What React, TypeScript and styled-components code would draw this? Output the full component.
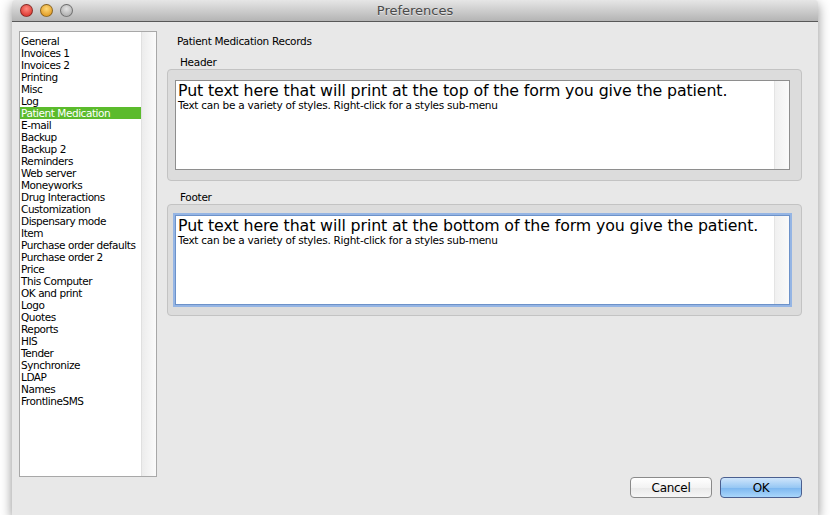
import styled, { createGlobalStyle } from "styled-components";

const GlobalStyle = createGlobalStyle`
    html, body {
        margin: 0;
        padding: 0;
        background: #ffffff;
    }
    body {
        font-family: "DejaVu Sans", "Liberation Sans", sans-serif;
        color: #000;
    }
`

const Window = styled.div`
    width: 806px;
    height: 515px;
    margin-left: 12px;
    background: #e8e8e8;
    box-shadow: 0 4px 12px rgba(0, 0, 0, 0.45);
    border-radius: 4px 4px 0 0;
    display: flex;
    flex-direction: column;
`

const TitleBar = styled.div`
    height: 22px;
    flex: none;
    position: relative;
    display: flex;
    align-items: center;
    justify-content: center;
    background: linear-gradient(#e6e6e6, #b4b4b4);
    border-bottom: 1px solid #585858;
    border-radius: 4px 4px 0 0;
    box-sizing: border-box;

    .title {
        font-size: 13px;
        color: #4a4a4a;
        text-shadow: 0 1px 0 rgba(255, 255, 255, 0.5);
    }
`

const Lights = styled.div`
    position: absolute;
    left: 8px;
    top: 4px;
    display: flex;
    gap: 7px;
`

const Light = styled.span<{ $c1: string; $c2: string }>`
    width: 13px;
    height: 13px;
    border-radius: 50%;
    box-sizing: border-box;
    border: 1px solid rgba(0, 0, 0, 0.4);
    background: radial-gradient(circle at 50% 35%, ${p => p.$c1}, ${p => p.$c2});
`

const Body = styled.div`
    flex: 1;
    display: flex;
    align-items: flex-start;
    padding: 9px 16px 17px 7px;
    gap: 10px;
`

const List = styled.div`
    width: 138px;
    height: 446px;
    flex: none;
    background: #fff;
    border: 1px solid #a8a8a8;
    box-sizing: border-box;
    display: flex;
`

const Items = styled.div`
    flex: 1;
    padding-top: 3px;
`

const ListScroll = styled.div`
    width: 14px;
    background: linear-gradient(to right, #ececec, #fbfbfb);
    border-left: 1px solid #e0e0e0;
`

const Item = styled.div<{ $selected?: boolean }>`
    height: 12px;
    line-height: 12px;
    font-size: 10.5px;
    padding-left: 1px;
    white-space: nowrap;
    letter-spacing: -0.45px;
    background: ${p => (p.$selected ? "#5bbb2c" : "transparent")};
    color: ${p => (p.$selected ? "#fff" : "#000")};
`

const Main = styled.div`
    flex: 1;
    align-self: stretch;
    display: flex;
    flex-direction: column;
`

const Heading = styled.div`
    font-size: 10.5px;
    letter-spacing: -0.3px;
    padding-left: 10px;
    margin-top: 4px;
    height: 14px;
`

const Label = styled.div<{ $gap: number }>`
    font-size: 10.5px;
    letter-spacing: -0.3px;
    padding-left: 13px;
    margin-top: ${p => p.$gap}px;
    height: 12px;
`

const Group = styled.div`
    margin-top: 1px;
    height: 112px;
    box-sizing: border-box;
    background: #dcdcdc;
    border: 1px solid #c3c3c3;
    border-radius: 4px;
    padding: 10px 11px 10px 7px;
    display: flex;
`

const TextBox = styled.div<{ $focused?: boolean }>`
    flex: 1;
    background: #fff;
    border: 1px solid ${p => (p.$focused ? "#6d92c9" : "#8e8e8e")};
    box-shadow: ${p => (p.$focused ? "0 0 0 2px #95b5e4" : "none")};
    display: flex;
    box-sizing: border-box;
`

const TextArea = styled.div`
    flex: 1;
    padding: 0 2px;
    overflow: hidden;

    .big {
        font-size: 15.8px;
        line-height: 19px;
        white-space: nowrap;
        letter-spacing: -0.12px;
    }
    .small {
        font-size: 10.5px;
        line-height: 11px;
        white-space: nowrap;
        letter-spacing: -0.25px;
    }
`

const BoxScroll = styled.div`
    width: 14px;
    background: linear-gradient(to right, #f0f0f0, #fafafa);
    border-left: 1px solid #e4e4e4;
`

const Footer = styled.div`
    margin-top: auto;
    display: flex;
    justify-content: flex-end;
    gap: 8px;
`

const Button = styled.button<{ $primary?: boolean }>`
    width: 82px;
    height: 21px;
    border-radius: 4px;
    font-family: "DejaVu Sans", "Liberation Sans", sans-serif;
    font-size: 12px;
    letter-spacing: -0.3px;
    color: #000;
    border: 1px solid ${p => (p.$primary ? "#4b5f8f" : "#8a8a8a")};
    background: ${p =>
        p.$primary
            ? "linear-gradient(#cfe5fb 0%, #98c8f4 50%, #7bb6ef 51%, #a9d6fb 100%)"
            : "linear-gradient(#ffffff 0%, #f3f3f3 50%, #e9e9e9 51%, #f6f6f6 100%)"};
    padding: 0;
`

const items = [
    "General", "Invoices 1", "Invoices 2", "Printing", "Misc", "Log",
    "Patient Medication", "E-mail", "Backup", "Backup 2", "Reminders",
    "Web server", "Moneyworks", "Drug Interactions", "Customization",
    "Dispensary mode", "Item", "Purchase order defaults", "Purchase order 2",
    "Price", "This Computer", "OK and print", "Logo", "Quotes", "Reports",
    "HIS", "Tender", "Synchronize", "LDAP", "Names", "FrontlineSMS",
]

function Editor({ where, focused }: { where: string; focused?: boolean }) {
    return (
        <TextBox $focused={focused}>
            <TextArea>
                <div className="big">Put text here that will print at the {where} of the form you give the patient.</div>
                <div className="small">Text can be a variety of styles. Right-click for a styles sub-menu</div>
            </TextArea>
            <BoxScroll />
        </TextBox>
    )
}

export default function App() {
    return (
        <>
            <GlobalStyle />
            <Window>
                <TitleBar>
                    <Lights>
                        <Light $c1="#ff8a80" $c2="#d2231c" />
                        <Light $c1="#ffd978" $c2="#d88c10" />
                        <Light $c1="#e4e4e4" $c2="#a2a2a2" />
                    </Lights>
                    <span className="title">Preferences</span>
                </TitleBar>
                <Body>
                    <List>
                        <Items>
                            {items.map(i => (
                                <Item key={i} $selected={i === "Patient Medication"}>{i}</Item>
                            ))}
                        </Items>
                        <ListScroll />
                    </List>
                    <Main>
                        <Heading>Patient Medication Records</Heading>
                        <Label $gap={7}>Header</Label>
                        <Group>
                            <Editor where="top" />
                        </Group>
                        <Label $gap={10}>Footer</Label>
                        <Group>
                            <Editor where="bottom" focused />
                        </Group>
                        <Footer>
                            <Button>Cancel</Button>
                            <Button $primary>OK</Button>
                        </Footer>
                    </Main>
                </Body>
            </Window>
        </>
    )
}
